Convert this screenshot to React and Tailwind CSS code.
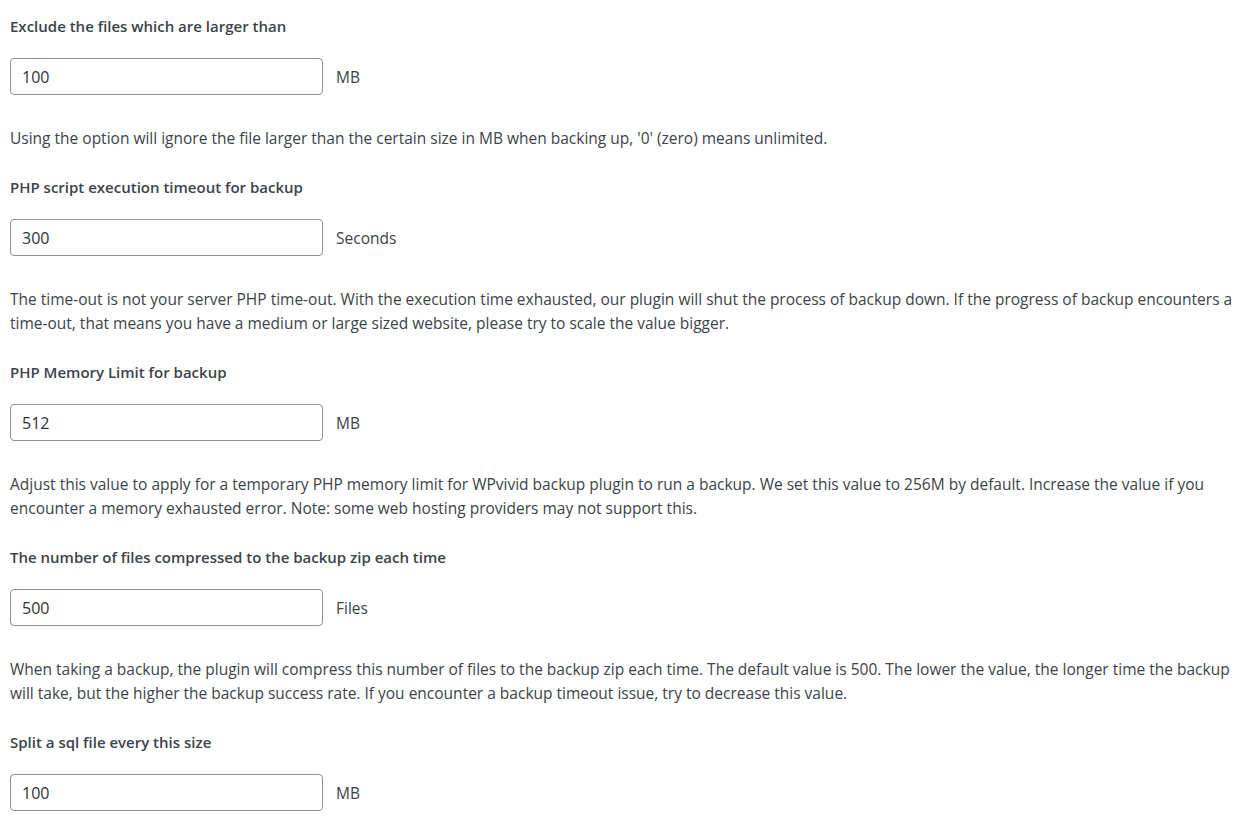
import React from "react";

const settings = [
  {
    label: "Exclude the files which are larger than",
    value: "100",
    unit: "MB",
    desc: "Using the option will ignore the file larger than the certain size in MB when backing up, '0' (zero) means unlimited.",
  },
  {
    label: "PHP script execution timeout for backup",
    value: "300",
    unit: "Seconds",
    desc: "The time-out is not your server PHP time-out. With the execution time exhausted, our plugin will shut the process of backup down. If the progress of backup encounters a time-out, that means you have a medium or large sized website, please try to scale the value bigger.",
  },
  {
    label: "PHP Memory Limit for backup",
    value: "512",
    unit: "MB",
    desc: "Adjust this value to apply for a temporary PHP memory limit for WPvivid backup plugin to run a backup. We set this value to 256M by default. Increase the value if you encounter a memory exhausted error. Note: some web hosting providers may not support this.",
  },
  {
    label: "The number of files compressed to the backup zip each time",
    value: "500",
    unit: "Files",
    desc: "When taking a backup, the plugin will compress this number of files to the backup zip each time. The default value is 500. The lower the value, the longer time the backup will take, but the higher the backup success rate. If you encounter a backup timeout issue, try to decrease this value.",
  },
  {
    label: "Split a sql file every this size",
    value: "100",
    unit: "MB",
  },
];

const Setting = ({ label, value, unit, desc }) => {
  return (
    <div className="mb-[27px]">
      <p className="text-[15px] leading-5 font-semibold text-[#3c434a]">{label}</p>
      <div className="flex items-center mt-[22px]">
        <input
          type="text"
          defaultValue={value}
          className="w-[313px] h-[37px] px-[11px] border border-[#8c8f94] rounded-[4px] text-[16px] text-[#2c3338] bg-white outline-none"
        />
        <span className="ml-[13px] pt-[3px] text-[15.5px] text-[#3c434a]">{unit}</span>
      </div>
      {desc && (
        <p className="mt-[31px] text-[15.5px] leading-[24px] text-[#3c434a]">{desc}</p>
      )}
    </div>
  );
};

export default function App() {
  return (
    <div
      className="min-h-screen bg-white pl-[10px] pr-[20px] pt-4"
      style={{ fontFamily: '"Open Sans", "Noto Sans", sans-serif' }}
    >
      {settings.map((s, i) => (
        <Setting key={i} {...s} />
      ))}
    </div>
  );
}
